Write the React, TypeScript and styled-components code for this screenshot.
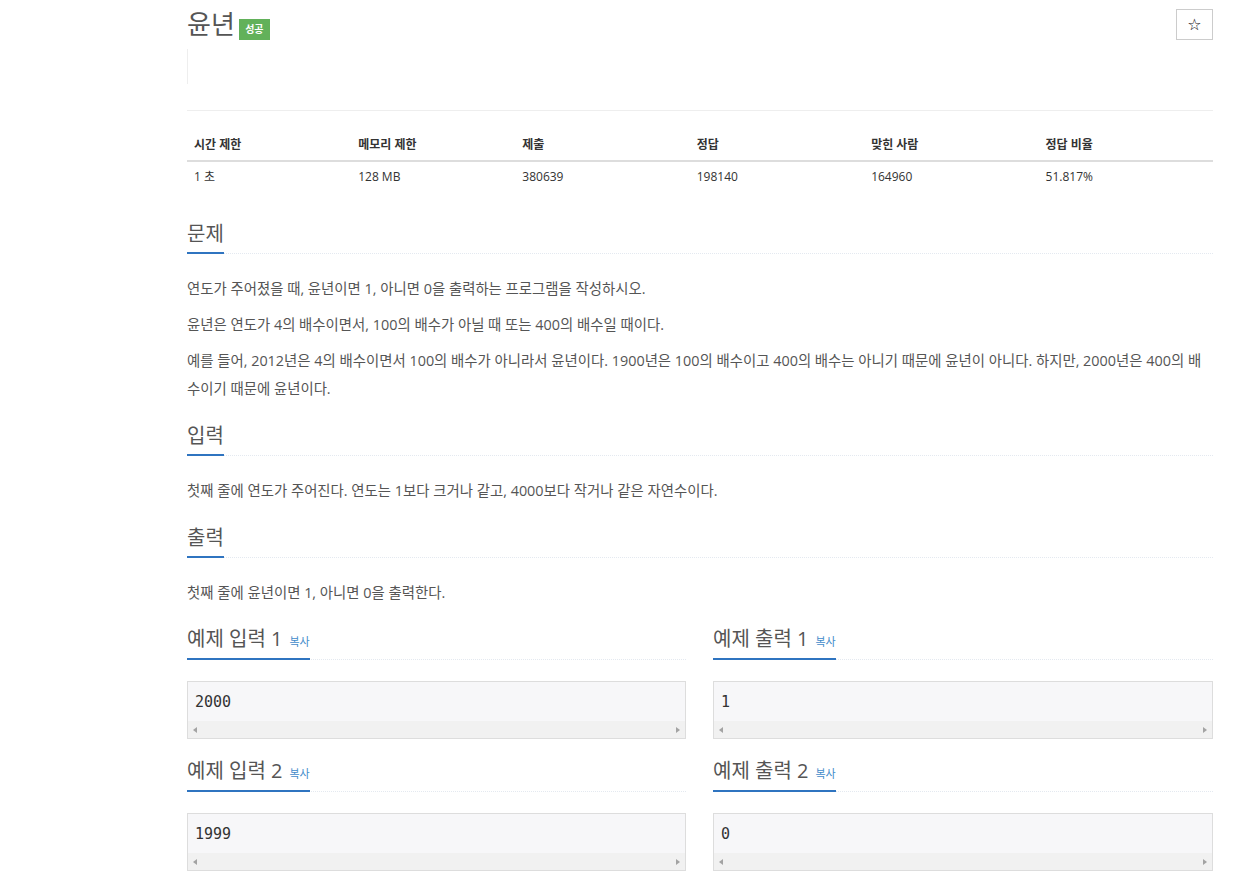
import React from "react";
import styled, { createGlobalStyle } from "styled-components";

const Global = createGlobalStyle`
  html, body { margin: 0; padding: 0; background: #fff; }
  body {
    font-family: "Open Sans", "Noto Sans CJK KR", sans-serif;
    color: #555;
  }
  * { box-sizing: border-box; }
`;

const Page = styled.div`
  width: 1026px;
  margin-left: 187px;
  padding-top: 9px;
  padding-bottom: 20px;
`;

const TitleRow = styled.div`
  display: flex;
  align-items: center;
  justify-content: space-between;
  height: 31px;
`;

const Title = styled.h1`
  margin: 0;
  display: flex;
  align-items: center;
  gap: 4px;
  font-size: 26px;
  font-weight: 400;
  line-height: 31px;
  color: #555;
`;

const Badge = styled.span`
  display: inline-flex;
  align-items: center;
  justify-content: center;
  width: 31px;
  height: 21px;
  margin-top: 10px;
  background: #62b15a;
  color: #fff;
  font-size: 10px;
  font-weight: 700;
`;

const StarButton = styled.button`
  width: 37px;
  height: 31px;
  border: 1px solid #ccc;
  background: #fff;
  color: #111;
  font-size: 16px;
  padding: 0;
  font-family: "DejaVu Sans", sans-serif;
  display: flex;
  align-items: center;
  justify-content: center;
`;

const Menu = styled.div`
  margin-top: 9px;
  height: 35px;
  border-left: 1px solid #eee;
`;

const Divider = styled.div`
  margin-top: 26px;
  border-top: 1px solid #eee;
`;

const Table = styled.table`
  width: 100%;
  margin-top: 16px;
  border-collapse: collapse;
  table-layout: fixed;
  font-size: 12px;
  color: #333;
`;

const Th = styled.th<{ $w: number }>`
  width: ${(p) => p.$w}%;
  text-align: left;
  font-weight: 700;
  padding: 9px 7px 7px;
  line-height: 17px;
  border-bottom: 2px solid #ddd;
`;

const Td = styled.td`
  padding: 6px 7px 8px;
  line-height: 17px;
`;

const Headline = styled.div<{ $top: number; $bottom: number }>`
  margin-top: ${(p) => p.$top}px;
  margin-bottom: ${(p) => p.$bottom}px;
  border-bottom: 1px dotted #e4e9f0;
`;

const H2 = styled.h2<{ $pad: number }>`
  display: inline-flex;
  align-items: baseline;
  gap: 7px;
  margin: 0 0 -1px 0;
  padding-bottom: ${(p) => p.$pad}px;
  border-bottom: 2px solid #2f74c0;
  font-size: 20px;
  font-weight: 400;
  line-height: 22px;
  color: #555;
`;

const Copy = styled.span`
  font-size: 11px;
  color: #428bca;
`;

const Text = styled.p`
  margin: 0 0 8px 0;
  font-size: 14.4px;
  line-height: 28px;
  color: #555;
  word-break: break-all;
`;

const Samples = styled.div`
  display: grid;
  grid-template-columns: 499px 500px;
  column-gap: 27px;
`;

const SampleCol = styled.div``;

const Pre = styled.div`
  border: 1px solid #ddd;
  background: #f7f7f9;
  color: #333;
`;

const PreText = styled.div`
  font-family: "DejaVu Sans Mono", monospace;
  font-size: 15px;
  line-height: 20px;
  padding: 10px 7px 9px 7px;
  white-space: pre;
`;

const ScrollBar = styled.div`
  height: 17px;
  background: #f1f1f1;
  display: flex;
  align-items: center;
  justify-content: space-between;
  padding: 0 5px;
`;

const Arrow = styled.span<{ $dir: "left" | "right" }>`
  width: 0;
  height: 0;
  border-top: 3.5px solid transparent;
  border-bottom: 3.5px solid transparent;
  ${(p) =>
    p.$dir === "left"
      ? "border-right: 4px solid #a3a3a3;"
      : "border-left: 4px solid #a3a3a3;"}
`;

const headers = [
  { label: "시간 제한", w: 16 },
  { label: "메모리 제한", w: 16 },
  { label: "제출", w: 17 },
  { label: "정답", w: 17 },
  { label: "맞힌 사람", w: 17 },
  { label: "정답 비율", w: 17 },
];
const values = ["1 초", "128 MB", "380639", "198140", "164960", "51.817%"];

function Section({ title, top }: { title: string; top: number }) {
  return (
    <Headline $top={top} $bottom={21}>
      <H2 $pad={7}>{title}</H2>
    </Headline>
  );
}

function Sample({ title, value, top }: { title: string; value: string; top: number }) {
  return (
    <SampleCol>
      <Headline $top={top} $bottom={21}>
        <H2 $pad={5}>
          {title}
          <Copy>복사</Copy>
        </H2>
      </Headline>
      <Pre>
        <PreText>{value}</PreText>
        <ScrollBar>
          <Arrow $dir="left" />
          <Arrow $dir="right" />
        </ScrollBar>
      </Pre>
    </SampleCol>
  );
}

export default function App() {
  return (
    <>
      <Global />
      <Page>
        <TitleRow>
          <Title>
            윤년 <Badge>성공</Badge>
          </Title>
          <StarButton>☆</StarButton>
        </TitleRow>
        <Menu />
        <Divider />
        <Table>
          <thead>
            <tr>
              {headers.map((h) => (
                <Th key={h.label} $w={h.w}>
                  {h.label}
                </Th>
              ))}
            </tr>
          </thead>
          <tbody>
            <tr>
              {values.map((v) => (
                <Td key={v}>{v}</Td>
              ))}
            </tr>
          </tbody>
        </Table>

        <Section title="문제" top={30} />
        <Text>연도가 주어졌을 때, 윤년이면 1, 아니면 0을 출력하는 프로그램을 작성하시오.</Text>
        <Text>윤년은 연도가 4의 배수이면서, 100의 배수가 아닐 때 또는 400의 배수일 때이다.</Text>
        <Text>
          예를 들어, 2012년은 4의 배수이면서 100의 배수가 아니라서 윤년이다. 1900년은 100의 배수이고 400의 배수는
          아니기 때문에 윤년이 아니다. 하지만, 2000년은 400의 배수이기 때문에 윤년이다.
        </Text>

        <Section title="입력" top={22} />
        <Text>첫째 줄에 연도가 주어진다. 연도는 1보다 크거나 같고, 4000보다 작거나 같은 자연수이다.</Text>

        <Section title="출력" top={22} />
        <Text>첫째 줄에 윤년이면 1, 아니면 0을 출력한다.</Text>

        <Samples>
          <Sample title="예제 입력 1" value="2000" top={13} />
          <Sample title="예제 출력 1" value="1" top={13} />
          <Sample title="예제 입력 2" value="1999" top={21} />
          <Sample title="예제 출력 2" value="0" top={21} />
        </Samples>
      </Page>
    </>
  );
}
